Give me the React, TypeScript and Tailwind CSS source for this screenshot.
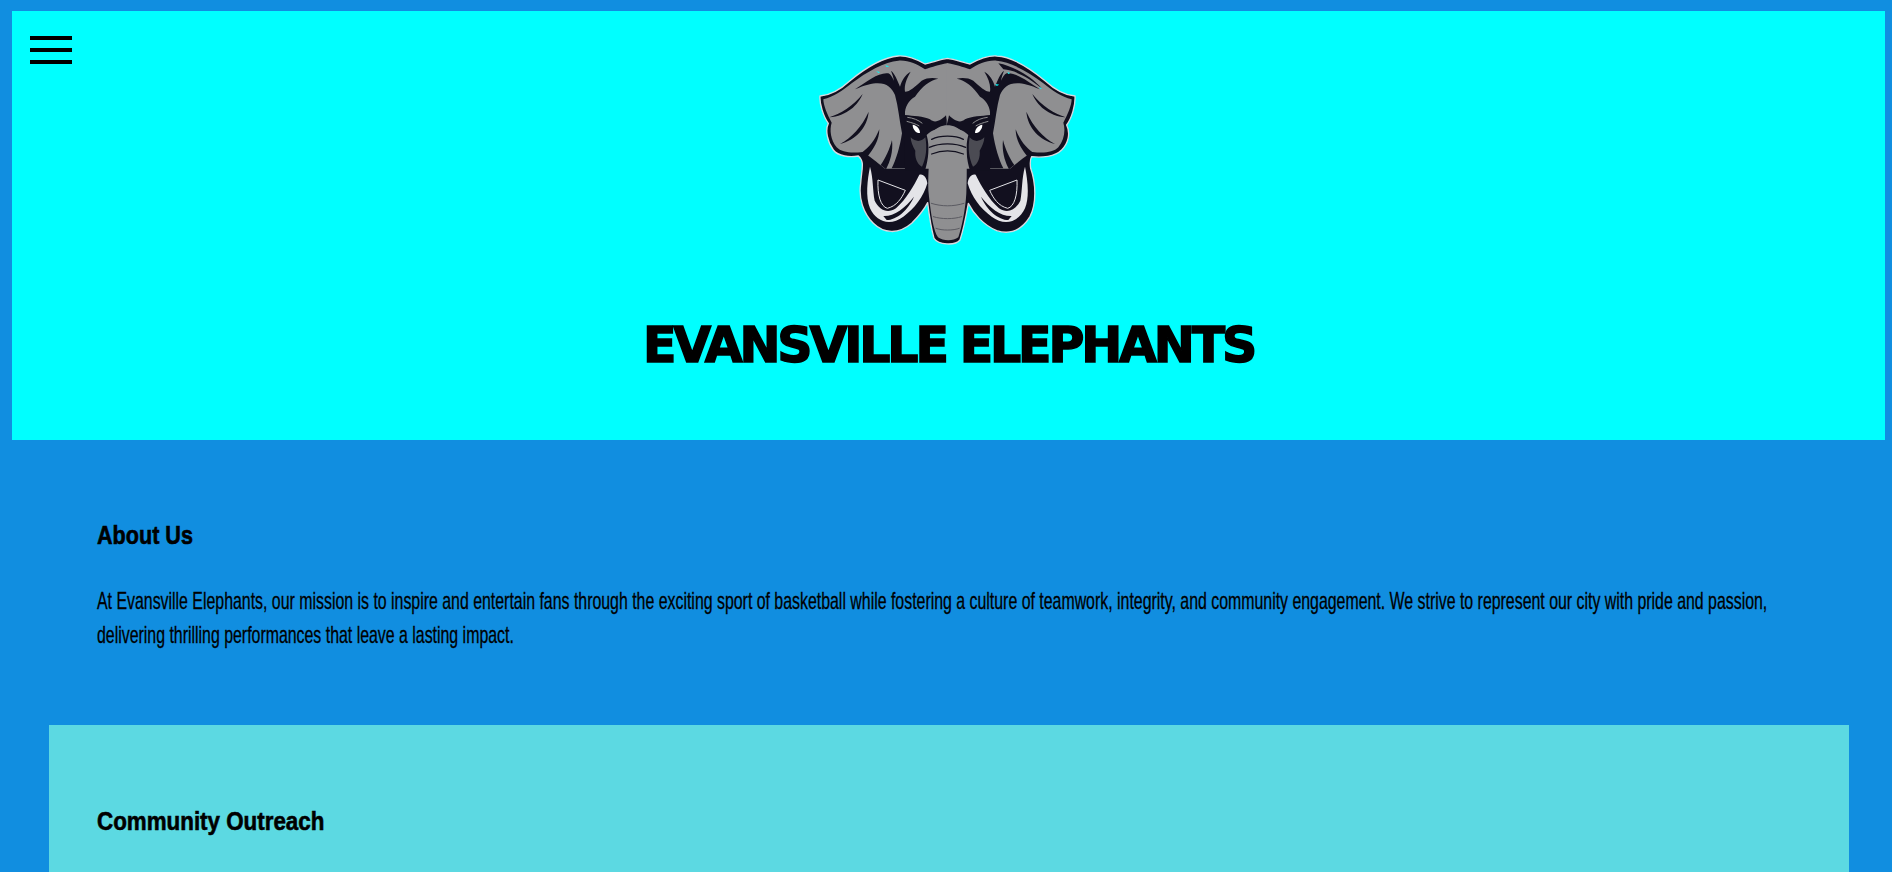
const INK = "#12101f";
const GRAY = "#8f8f91";

function Half() {
  return (
    <g>
      <path fill={GRAY} d="M475 70C450 72 425 82 405 88C380 72 355 60 325 62C285 65 230 95 185 130C160 150 130 172 100 178C100 195 112 225 125 248C118 270 122 300 140 322C155 338 185 340 218 336C235 345 262 368 285 386L475 386Z" />
      <path fill={INK} d="M195 148C230 125 265 98 292 100C300 100 305 108 312 122C310 110 306 100 303 92C315 102 322 120 330 140C336 120 345 105 362 95C350 115 342 135 345 155C360 155 375 140 395 122C410 113 430 113 445 116C420 120 395 140 375 170C358 180 348 195 345 215L345 240C350 270 345 300 350 340L345 385L305 385C318 360 330 320 336 280C328 240 325 200 315 165C300 130 270 115 195 148Z" />
      <path fill={INK} d="M118 232C150 222 190 198 218 162C205 195 170 228 118 232ZM150 312C185 292 215 262 236 215C232 265 195 300 150 312ZM215 338C238 322 255 300 268 268C268 300 250 328 232 350ZM272 375C288 352 298 330 306 300C310 335 300 365 288 388Z" />
      <path fill={INK} d="M345 225C370 228 400 228 420 238C435 252 455 240 468 226C470 240 475 250 475 262C450 262 425 270 410 285C420 320 415 360 405 392L345 392L342 300Z" />
      <path fill="#4b4b53" d="M362 292C380 310 398 302 406 292C412 325 408 355 396 380C380 372 374 350 376 332C368 318 362 305 362 292Z" />
      <path fill="#fff" d="M368 254C380 256 390 266 390 279C378 280 368 268 368 254Z" />
      <path fill="none" stroke={GRAY} strokeWidth="3" d="M352 232C370 234 385 240 397 250M350 244C365 248 378 252 388 258" />
      <path fill="#e4e4e8" d="M240 380C232 420 226 470 240 505C258 545 300 560 340 530C375 505 400 470 412 430C410 412 400 400 388 404C370 440 350 475 318 505C292 522 268 510 254 482C248 450 250 415 240 380Z" />
      <path fill={INK} d="M280 528C310 530 345 505 372 470C355 510 320 540 290 540Z" />
      <path fill={INK} stroke="#e4e4e8" strokeWidth="3" d="M264 420L346 451C335 475 320 498 292 505C272 500 262 465 264 420Z" />
    </g>
  );
}

function ElephantLogo() {
  return (
    <svg viewBox="0 0 930 660" className="-ml-[7px] h-[220px] w-[310px]" aria-label="Evansville Elephants logo">
      <path
        fill={INK}
        stroke="#d9d9df"
        strokeWidth="4"
        strokeLinejoin="round"
        d="M472 55C450 58 425 68 405 72C380 58 355 46 325 48C280 52 225 85 180 122C155 145 125 165 90 168C88 190 100 230 115 250C105 270 112 305 130 330C145 350 180 352 205 348C225 365 215 385 212 430C205 475 220 520 250 550C280 580 325 585 365 550C385 530 402 510 413 488C418 530 425 570 432 595C445 615 495 618 510 600C520 570 528 530 535 490C550 520 580 555 620 572C660 585 695 570 720 530C740 490 738 430 722 385C720 370 722 355 725 350C755 354 795 350 815 330C835 310 842 280 830 255C845 235 857 195 855 168C820 165 790 145 765 122C720 85 665 50 620 48C590 46 565 58 540 72C520 68 495 58 472 55Z"
      />
      <Half />
      <g transform="translate(945 0) scale(-1 1)">
        <Half />
      </g>
      <path fill={INK} d="M625 70C670 78 725 110 755 145C720 115 675 90 640 88Z" />
      <path fill="#00ffff" d="M258 94L270 96L266 99ZM286 76L298 79L290 81ZM652 97L661 99L655 102ZM616 132L628 134L620 138ZM748 142L756 145L750 147Z" />
      <path fill={GRAY} d="M418 285C440 262 455 256 472 256C490 256 505 262 527 285C530 330 532 390 529 460C526 510 516 560 505 592C490 604 460 604 444 592C430 570 424 530 417 470C410 420 422 340 418 285Z" />
      <path fill="none" stroke={INK} strokeWidth="4" strokeLinecap="round" d="M425 298C450 285 495 285 520 298M418 322C450 308 495 308 527 322M425 342C455 330 490 330 520 342" />
      <path fill="none" stroke="#5b5b62" strokeWidth="3" strokeLinecap="round" d="M424 490C455 500 490 500 522 490M430 530C455 538 490 538 515 530M438 565C455 572 490 572 508 565" />
    </svg>
  );
}

export default function App() {
  return (
    <div className="h-screen overflow-hidden bg-[#118ee0] pt-[11px] text-black [font-family:'Liberation_Sans',sans-serif]">
      <header className="relative ml-3 mr-[7px] flex h-[429px] flex-col items-center bg-[#00ffff] pt-[29px]">
        <button className="absolute left-[18px] top-[25px] flex w-[42px] flex-col gap-2" aria-label="Menu">
          <span className="h-1 bg-black" />
          <span className="h-1 bg-black" />
          <span className="h-1 bg-black" />
        </button>
        <ElephantLogo />
        <h1 className="mt-[61px] whitespace-nowrap text-[49px] font-bold leading-[50px] tracking-[-3.15px] [-webkit-text-stroke:1.5px_black] [font-family:'DejaVu_Sans',sans-serif]">
          EVANSVILLE ELEPHANTS
        </h1>
      </header>
      <section className="ml-[97px] mr-[100px] mt-[78px]">
        <h2 className="origin-left scale-x-[0.83] whitespace-nowrap text-[26px] font-bold leading-[34px] [-webkit-text-stroke:0.6px_black]">About Us</h2>
        <p className="mt-[32px] origin-left scale-x-[0.662] whitespace-nowrap text-[24px] leading-[34px] [-webkit-text-stroke:0.3px_black]">
          At Evansville Elephants, our mission is to inspire and entertain fans through the exciting sport of basketball while fostering a culture of teamwork, integrity, and community engagement. We strive to represent our city with pride and passion,
          <br />
          delivering thrilling performances that leave a lasting impact.
        </p>
      </section>
      <section className="ml-[49px] mr-[43px] mt-[73px] h-[400px] bg-[#5cd9e2] pl-12 pt-[79px]">
        <h2 className="origin-left scale-x-[0.86] whitespace-nowrap text-[26px] font-bold leading-[34px] [-webkit-text-stroke:0.6px_black]">Community Outreach</h2>
      </section>
    </div>
  );
}
